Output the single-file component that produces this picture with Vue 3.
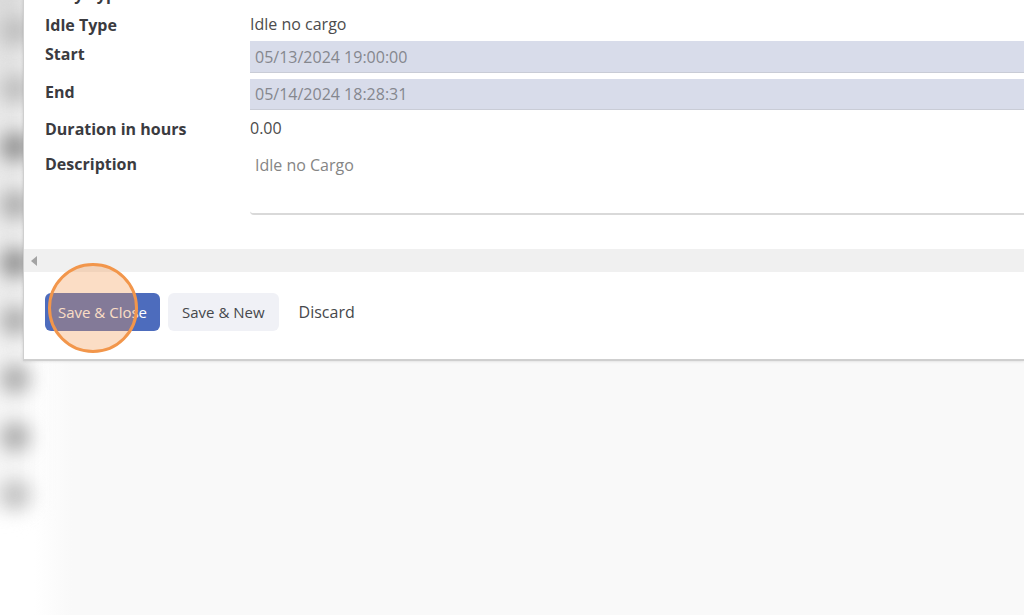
<script setup>
import { ref } from 'vue'

const start = ref('05/13/2024 19:00:00')
const end = ref('05/14/2024 18:28:31')
const description = ref('Idle no Cargo')
const marks = ['faint', 'faint', 'strong', 'mid', 'strong', 'mid', 'mid', 'mid', 'light']
</script>

<template>
  <div class="page">
    <div class="backdrop" aria-hidden="true">
      <div class="rail"></div>
      <div class="shade"></div>
      <div class="marks">
        <span v-for="(tone, i) in marks" :key="i" class="mark" :class="tone"></span>
      </div>
    </div>
    <main class="dialog">
      <form class="fields" @submit.prevent>
        <span class="label">Duty Type</span>
        <span class="value">Idle</span>
        <span class="label">Idle Type</span>
        <span class="value">Idle no cargo</span>
        <label class="label" for="start">Start</label>
        <input id="start" v-model="start" class="field" type="text" />
        <label class="label" for="end">End</label>
        <input id="end" v-model="end" class="field" type="text" />
        <span class="label">Duration in hours</span>
        <span class="value">0.00</span>
        <label class="label top" for="description">Description</label>
        <textarea id="description" v-model="description" class="notes"></textarea>
      </form>
      <div class="scrollbar">
        <svg width="6" height="10" viewBox="0 0 6 10" aria-hidden="true"><path d="M6 0v10L0 5z" fill="#a3a3a3" /></svg>
      </div>
      <footer class="actions">
        <div class="save">
          <button type="button" class="btn primary">Save &amp; Close</button>
          <span class="pointer"></span>
        </div>
        <button type="button" class="btn secondary">Save &amp; New</button>
        <button type="button" class="btn plain">Discard</button>
      </footer>
    </main>
  </div>
</template>

<style>
body {
  margin: 0;
}
</style>

<style scoped>
.page {
  position: relative;
  min-height: 100vh;
  overflow: hidden;
  box-sizing: border-box;
  padding-left: 23px;
  background: #f9f9f9;
  font-family: "Open Sans", "Noto Sans", sans-serif;
  font-size: 16px;
  line-height: 24px;
  color: #4c4c4c;
}
.backdrop {
  position: absolute;
  inset: 0;
}
.rail {
  position: absolute;
  inset: 0 auto 0 0;
  width: 72px;
  background: linear-gradient(90deg, #fff 34px, #f9f9f9);
}
.shade {
  position: absolute;
  top: -40px;
  left: -20px;
  width: 50px;
  height: 550px;
  background: linear-gradient(#d4d4d4, #e8e8e8 25%, #ececec 60%, #f6f6f6 80%);
  filter: blur(12px);
}
.marks {
  position: absolute;
  top: 16px;
  left: 0;
  display: flex;
  flex-direction: column;
  gap: 28px;
}
.mark {
  width: 30px;
  height: 30px;
  border-radius: 50%;
  filter: blur(9px);
}
.faint {
  background: #bebebe;
}
.light {
  background: #c2c2c2;
}
.mid {
  background: #aeaeae;
}
.strong {
  background: #929292;
}
.dialog {
  position: relative;
  border: solid #cfcfcf;
  border-width: 0 0 2px 1px;
  background: #fff;
  box-shadow: 0 0 3px rgba(0, 0, 0, 0.15);
}
.fields {
  display: grid;
  grid-template-columns: 205px 1fr;
  grid-template-rows: 25px 23px 32px 31px 27px auto;
  row-gap: 6px;
  margin-top: -19px;
  padding: 0 0 34px 21px;
}
.label {
  padding-top: 1px;
  font-weight: 700;
  color: #3b3b3f;
}
.top {
  padding-top: 3px;
}
.field {
  box-sizing: border-box;
  min-width: 0;
  padding: 0 5px;
  border: 0;
  border-bottom: 1px solid #c9ccd6;
  border-radius: 0;
  background: #d8dcea;
  font: inherit;
  color: #85878e;
}
.notes {
  box-sizing: border-box;
  min-width: 0;
  height: 66px;
  padding: 4px 5px;
  border: 0;
  border-bottom: 2px solid #d9d9d9;
  border-radius: 4px 0 0 4px;
  background: #fff;
  font: inherit;
  color: #858585;
  resize: none;
}
.scrollbar {
  display: flex;
  align-items: center;
  height: 23px;
  padding-left: 7px;
  background: #f0f0f0;
}
.actions {
  display: flex;
  gap: 8px;
  padding: 21px 21px 28px;
}
.save {
  position: relative;
}
.btn {
  height: 38px;
  padding: 0 13px;
  border: 0;
  border-radius: 6px;
  font: inherit;
  color: #46484c;
}
.primary,
.secondary {
  font-size: 15px;
}
.primary {
  background: #4d6cbd;
  color: #fff;
}
.secondary {
  padding: 0 14px;
  background: #f0f1f6;
}
.plain {
  padding: 0 12px;
  background: transparent;
}
.pointer {
  position: absolute;
  top: -30px;
  left: 3px;
  box-sizing: border-box;
  width: 90px;
  height: 90px;
  border: 3px solid #f2964b;
  border-radius: 50%;
  background: rgba(243, 152, 79, 0.33);
  pointer-events: none;
}
</style>
